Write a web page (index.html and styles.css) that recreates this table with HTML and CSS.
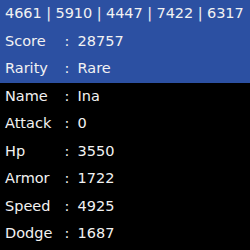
FILE: index.html
```html
<!DOCTYPE html>
<html>
<head>
<meta charset="utf-8">
<link rel="stylesheet" href="styles.css">
</head>
<body>
<div class="card">
  <div class="head">
    <div class="row ids">4661 | 5910 | 4447 | 7422 | 6317</div>
    <div class="row"><span class="label">Score</span><span class="colon">:</span><span class="value">28757</span></div>
    <div class="row"><span class="label">Rarity</span><span class="colon">:</span><span class="value">Rare</span></div>
  </div>
  <div class="stats">
    <div class="row"><span class="label">Name</span><span class="colon">:</span><span class="value">Ina</span></div>
    <div class="row"><span class="label">Attack</span><span class="colon">:</span><span class="value">0</span></div>
    <div class="row"><span class="label">Hp</span><span class="colon">:</span><span class="value">3550</span></div>
    <div class="row"><span class="label">Armor</span><span class="colon">:</span><span class="value">1722</span></div>
    <div class="row"><span class="label">Speed</span><span class="colon">:</span><span class="value">4925</span></div>
    <div class="row"><span class="label">Dodge</span><span class="colon">:</span><span class="value">1687</span></div>
  </div>
</div>
</body>
</html>
```

FILE: styles.css
```css
html, body {
  margin: 0;
  padding: 0;
  background: #000;
}
.card {
  width: 250px;
  height: 250px;
  overflow: hidden;
  font-family: "DejaVu Sans", sans-serif;
  font-size: 14.5px;
  color: #f2f2f2;
  font-feature-settings: "zero" 1;
}
.head {
  background: #2c50a2;
}
.row {
  display: flex;
  height: 27.5px;
  line-height: 27px;
  padding-left: 5px;
  white-space: nowrap;
}
.ids {
  letter-spacing: -0.07px;
}
.label {
  width: 59.5px;
}
.colon {
  width: 13px;
}
```
